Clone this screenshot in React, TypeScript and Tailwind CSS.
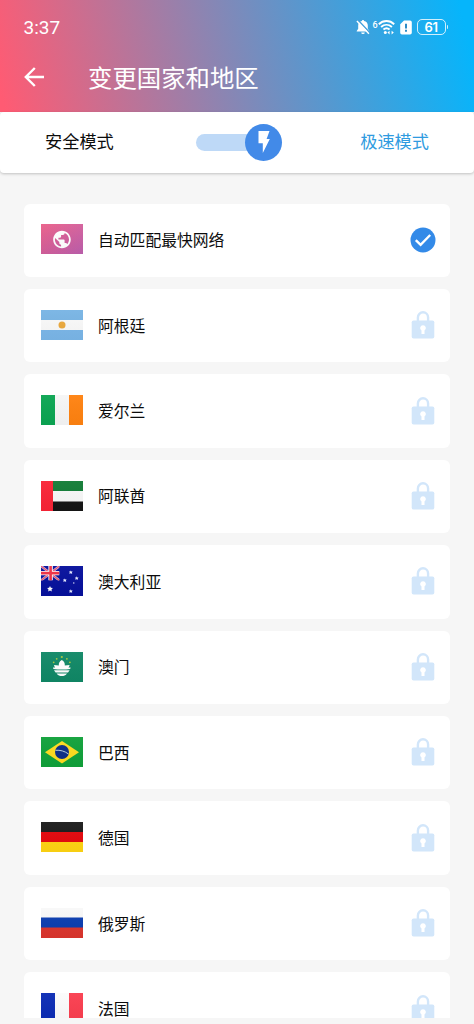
import type { ReactNode } from "react";

const countries = [
  { id: "auto", name: "自动匹配最快网络" },
  { id: "ar", name: "阿根廷" },
  { id: "ie", name: "爱尔兰" },
  { id: "ae", name: "阿联酋" },
  { id: "au", name: "澳大利亚" },
  { id: "mo", name: "澳门" },
  { id: "br", name: "巴西" },
  { id: "de", name: "德国" },
  { id: "ru", name: "俄罗斯" },
  { id: "fr", name: "法国" },
];

// every flag is drawn on a 42x30 canvas
const flags: Record<string, ReactNode> = {
  auto: (
    <>
      <defs>
        <linearGradient id="autoBg" x1="0" y1="0" x2="1" y2="1">
          <stop offset="0" stopColor="#ea5f88" />
          <stop offset="1" stopColor="#bd5fae" />
        </linearGradient>
      </defs>
      <rect width="42" height="30" fill="url(#autoBg)" />
      <g transform="translate(10.4 4.9) scale(0.88)">
        <path
          fill="#fff"
          d="M12 2C6.48 2 2 6.48 2 12s4.48 10 10 10 10-4.48 10-10S17.52 2 12 2zm-1 17.93c-3.95-.49-7-3.85-7-7.93 0-.62.08-1.21.21-1.79L9 15v1c0 1.1.9 2 2 2v1.93zm6.9-2.54c-.26-.81-1-1.39-1.9-1.39h-1v-3c0-.55-.45-1-1-1H8v-2h2c.55 0 1-.45 1-1V7h2c1.1 0 2-.9 2-2v-.41c2.93 1.19 5 4.06 5 7.41 0 2.08-.8 3.97-2.1 5.39z"
        />
      </g>
    </>
  ),
  ar: (
    <>
      <rect width="42" height="30" fill="#f9f9f9" />
      <rect width="42" height="10" fill="#78b4e4" />
      <rect y="20" width="42" height="10" fill="#7ab6e8" />
      <circle cx="21" cy="15" r="3.5" fill="#eba93d" />
    </>
  ),
  ie: (
    <>
      <rect width="42" height="30" fill="#f6f6f6" />
      <rect width="14" height="30" fill="#0ba552" />
      <rect x="28" width="14" height="30" fill="#ff8210" />
    </>
  ),
  ae: (
    <>
      <rect width="42" height="30" fill="#f7f7f7" />
      <rect x="12" width="30" height="10" fill="#127c36" />
      <rect x="12" y="20.5" width="30" height="9.5" fill="#151515" />
      <rect width="12" height="30" fill="#f92436" />
    </>
  ),
  au: (
    <>
      <rect width="42" height="30" fill="#06109c" />
      <svg width="18.5" height="14.5" viewBox="0 0 18.5 14.5">
        <path d="M0 0L18.5 14.5M18.5 0L0 14.5" stroke="#c9b3dc" strokeWidth="2.4" />
        <path d="M0 0L18.5 14.5M18.5 0L0 14.5" stroke="#ee5268" strokeWidth="1.1" />
        <path d="M9.6 0V14.5M0 7.1H18.5" stroke="#fff" strokeWidth="4.4" />
        <path d="M9.6 0V14.5M0 7.1H18.5" stroke="#f03044" strokeWidth="2.6" />
      </svg>
      <path
        fill="#fff"
        d="M9 20l.9 1.8 2 .3-1.4 1.4.3 2L9 24.6l-1.800.9.3-2-1.400-1.400 2-.3z"
      />
      <g fill="#e6eaff">
        <path d="M29.8 4.4l.6 1.100 1.300.1-.8 1 .3 1.300-1.400-.6-1.400.6.3-1.300-.8-1 1.300-.1z" />
        <path d="M23.8 12.4l.6 1.100 1.300.1-.8 1 .3 1.300-1.400-.6-1.400.6.3-1.300-.8-1 1.300-.1z" />
        <path d="M35.7 10.3l.6 1.100 1.300.1-.8 1 .3 1.300-1.400-.6-1.400.6.3-1.300-.8-1 1.300-.1z" />
        <path d="M29.8 23.3l.6 1.100 1.300.1-.8 1 .3 1.300-1.400-.6-1.400.6.3-1.300-.8-1 1.300-.1z" />
        <circle cx="32.8" cy="17" r=".7" />
      </g>
    </>
  ),
  mo: (
    <>
      <rect width="42" height="30" fill="#108866" />
      <g fill="#a9c83c">
        <circle cx="12.7" cy="10.3" r=".9" />
        <circle cx="15.7" cy="6.8" r=".9" />
        <circle cx="20.8" cy="5" r="1.1" />
        <circle cx="25.9" cy="6.8" r=".9" />
        <circle cx="28.9" cy="10.3" r=".9" />
      </g>
      <path fill="#fff" d="M20.8 8C23 9.2 24 11 23.8 13.6L28.6 13C28.4 14.2 28 15 27.4 15.6H29.6L29.2 17C24 17.8 17.6 17.8 12.4 17L12 15.600H14.200C13.600 15 13.200 14.200 13 13L17.800 13.600C17.600 11 18.600 9.200 20.800 8Z" />
      <path fill="#fff" d="M13 18.2H28.6L27 20.4H14.600Z" />
      <path fill="#fff" d="M15.600 21.400H26C23.400 25 18.200 25 15.600 21.400Z" />
    </>
  ),
  br: (
    <>
      <rect width="42" height="30" fill="#10a13a" />
      <path d="M21 4L38 15.2 21 26.4 4 15.2z" fill="#ffdc1e" />
      <circle cx="21" cy="15" r="7" fill="#0b2d86" />
      <path d="M14.5 13.3c4.600-.4 9.200.8 13 3.700" fill="none" stroke="#b6cddf" strokeWidth="1" />
    </>
  ),
  de: (
    <>
      <rect width="42" height="30" fill="#1b1b1b" />
      <rect y="10" width="42" height="10" fill="#e4080d" />
      <rect y="20" width="42" height="10" fill="#ffd412" />
    </>
  ),
  ru: (
    <>
      <rect width="42" height="30" fill="#f8f8f8" />
      <rect y="9.5" width="42" height="10.5" fill="#0b3db0" />
      <rect y="19.5" width="42" height="10.5" fill="#db352d" />
    </>
  ),
  fr: (
    <>
      <rect width="42" height="30" fill="#fbfbfb" />
      <rect width="14" height="30" fill="#0b2bb4" />
      <rect x="28" width="14" height="30" fill="#fa3e4f" />
    </>
  ),
};

function Flag({ id }: { id: string }) {
  return (
    <svg width="42" height="30" viewBox="0 0 42 30" className="shrink-0 mb-[1.5px]">
      <defs>
        <linearGradient id={`shade-${id}`} x1="0" y1="0" x2="0" y2="1">
          <stop offset="0" stopColor="#fff" stopOpacity="0.04" />
          <stop offset="1" stopColor="#000" stopOpacity="0.03" />
        </linearGradient>
      </defs>
      {flags[id]}
      <rect width="42" height="30" fill={`url(#shade-${id})`} />
    </svg>
  );
}

function Check() {
  return (
    <svg width="26" height="26" viewBox="0 0 26 26" className="shrink-0">
      <circle cx="13" cy="13" r="12.5" fill="#338ae8" />
      <path d="M5.8 13.1l4.8 4.7 9.600-9.800" fill="none" stroke="#fff" strokeWidth="2.4" />
    </svg>
  );
}

function Lock() {
  return (
    <svg width="26" height="28" viewBox="0 0 26 28" className="shrink-0 mb-px">
      <path d="M7.9 10.5V6.4a5.1 5.1 0 0 1 10.2 0v4.1" fill="none" stroke="#d2e6fa" strokeWidth="2.4" />
      <rect x="1.7" y="9.5" width="22.6" height="18" rx="1.8" fill="#d2e6fa" />
      <path d="M13 14.2a2.8 2.8 0 0 1 1.5 5.2V23h-3v-3.6a2.8 2.8 0 0 1 1.5-5.2z" fill="#fff" />
    </svg>
  );
}

function StatusBar() {
  return (
    <div className="flex items-center justify-between h-[54px] pl-[23.5px] pr-[26px] text-white">
      <span className="mt-px font-['Roboto',sans-serif] text-[19px] leading-6">3:37</span>
      <div className="flex items-center">
        <svg width="14" height="16" viewBox="0.500 0 14 16" className="mr-[3px]">
          <path
            d="M7.5 1c.7 0 1 .4 1 1 2.5.5 3.8 2.2 3.8 4.6v3.2l1.5 2.2v.6H1.2V12l1.5-2.2V6.6C2.7 4.2 4 2.5 6.5 2c0-.6.3-1 1-1zM5.7 13.5h3.6a1.8 1.6 0 0 1-3.600 0z"
            fill="#fff"
          />
          <path d="M2.400 1L14.2 13.600" stroke="#429fdc" strokeWidth="1.5" />
          <path d="M1.400 2L13.4 14.800" stroke="#fff" strokeWidth="1.4" />
        </svg>
        <span className="font-['Roboto',sans-serif] font-medium text-[9px] leading-3 self-start w-[5px]">6</span>
        <svg width="17" height="16" viewBox="0 0 17 16" fill="none" stroke="#fff" strokeWidth="1.9" className="mr-[5px]">
          <path d="M.8 5.2c4.4-4.2 11-4.2 15.4 0M3.1 8c3.2-2.9 7.6-2.9 10.8 0M5.4 10.6c1.9-1.6 4.3-1.6 6.2 0" />
          <circle cx="7.3" cy="13.4" r="1.5" fill="#fff" stroke="none" />
          <path d="M9.400 13.6l2.200-1.800v3.600zM15.800 13.600l-2.200-1.800v3.600z" fill="#fff" stroke="none" />
        </svg>
        <svg width="12" height="15" viewBox="0 0 12 15" className="mr-[5px]">
          <path d="M4 .5h6a1.8 1.8 0 0 1 1.8 1.8v10.4a1.8 1.8 0 0 1-1.8 1.8H2a1.8 1.8 0 0 1-1.8-1.800V4.3z" fill="#fff" />
          <path d="M6 3.8v4.6M6 9.8v1.900" stroke="#2587c4" strokeWidth="1.9" />
        </svg>
        <div className="flex items-center justify-center w-[29px] h-4 rounded-[5px] border border-white/80 font-['Inter',sans-serif] font-semibold text-[13px] tracking-[-0.5px] leading-none">
          61
        </div>
        <div className="w-[1.5px] h-1 ml-px rounded-r-sm bg-white/80" />
      </div>
    </div>
  );
}

export default function App() {
  return (
    <div className="flex flex-col w-full h-screen overflow-hidden bg-[#f6f6f6] font-['Noto_Sans_CJK_SC',sans-serif]">
      <header className="shrink-0 h-[111.5px] bg-[linear-gradient(77deg,#ff5b73_0%,#ff5b73_1%,#06b5fb_97%)]">
        <StatusBar />
        <div className="flex items-center h-[46px] pl-6 text-white">
          <svg width="21" height="20" viewBox="0 0 21 20" fill="none" stroke="#fff" strokeWidth="2.4">
            <path d="M20 10H2.5M10.8 1L1.8 10l9 9" />
          </svg>
          <h1 className="ml-[43px] text-[24.4px] leading-9">变更国家和地区</h1>
        </div>
      </header>

      <div className="shrink-0 flex items-center justify-between h-[61px] px-[45px] rounded bg-white shadow-[0_1px_3px_rgba(0,0,0,0.22)]">
        <span className="mb-[2px] text-[17.2px] leading-6 text-[#0c0c0c]">安全模式</span>
        <div className="flex items-center w-[86px] h-[37px] ml-1">
          <div className="w-[66px] h-[17px] rounded-l-full bg-[#bed9f7]" />
          <div className="-ml-[17px] shrink-0 flex items-center justify-center size-[37px] rounded-full bg-[#428ae8]">
            <svg width="12" height="22" viewBox="0 0 12 22" fill="#fff">
              <path d="M.5 0h11L8.6 8h3.2L4.8 22v-9.8H.5z" />
            </svg>
          </div>
        </div>
        <span className="mb-[2px] text-[17.2px] leading-6 text-[#2f9be0]">极速模式</span>
      </div>

      <main className="flex-1 overflow-hidden mt-[31px] mb-1.5">
        <ul className="flex flex-col gap-3 pl-6 pr-[24.5px]">
          {countries.map((c) => (
            <li
              key={c.id}
              className="shrink-0 flex items-center h-[73.43px] pl-[17px] pr-3.5 rounded-md bg-white"
            >
              <Flag id={c.id} />
              <span className="flex-1 ml-[15px] text-[15.8px] leading-6 text-[#0c0c0c]">{c.name}</span>
              {c.id === "auto" ? <Check /> : <Lock />}
            </li>
          ))}
        </ul>
      </main>
    </div>
  );
}
